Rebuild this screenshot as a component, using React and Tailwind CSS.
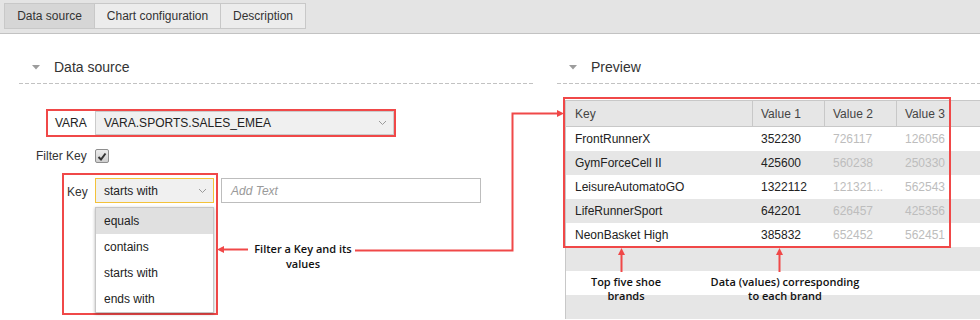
import React from "react";

const RED = "#f04848";

const rows = [
  { key: "FrontRunnerX", v1: "352230", v2: "726117", v3: "126056" },
  { key: "GymForceCell II", v1: "425600", v2: "560238", v3: "250330" },
  { key: "LeisureAutomatoGO", v1: "1322112", v2: "121321...", v3: "562543" },
  { key: "LifeRunnerSport", v1: "642201", v2: "626457", v3: "425356" },
  { key: "NeonBasket High", v1: "385832", v2: "652452", v3: "562451" },
  null,
  null,
  null,
];

function Chevron() {
  return (
    <svg width="9" height="6" viewBox="0 0 9 6" className="shrink-0">
      <polyline points="1,1 4.5,4.5 8,1" fill="none" stroke="#9a9a9a" strokeWidth="1" />
    </svg>
  );
}

function Caret() {
  return (
    <svg width="8" height="5" viewBox="0 0 8 5" className="shrink-0">
      <polygon points="0,0 8,0 4,4.5" fill="#9c9c9c" />
    </svg>
  );
}

function SectionHeader({ title, caretPad, textGap }) {
  return (
    <div className="pt-[23px]">
      <div className={`h-[20px] flex items-center ${caretPad}`}>
        <Caret />
        <span className={`text-[14px] text-[#333] ${textGap}`}>{title}</span>
      </div>
      <div className="mt-[6px] h-px bg-[linear-gradient(to_right,#c2c2c2_4px,transparent_4px)] bg-[length:6px_1px]" />
    </div>
  );
}

function Tab({ label, active, width }) {
  return (
    <div
      className={`${width} h-[26px] -ml-px first:ml-0 flex items-center justify-center whitespace-nowrap border border-[#c8c8c8] text-[12px] text-[#333] ${
        active ? "bg-[#d6d6d6]" : "bg-[#ececec]"
      }`}
    >
      {label}
    </div>
  );
}

export default function App() {
  return (
    <div className="relative w-[980px] h-[320px] overflow-hidden bg-white text-[#333] font-['Liberation_Sans',Arial,sans-serif]">
      {/* tabs */}
      <div className="h-[34px] bg-[#e4e4e4] border-b border-[#c2c2c2] flex items-start pt-[3px] pl-[4px]">
        <Tab label="Data source" width="w-[91px]" active />
        <Tab label="Chart configuration" width="w-[127px]" />
        <Tab label="Description" width="w-[86px]" />
      </div>

      <div className="flex">
        {/* left column */}
        <div className="w-[545px] pl-[19px] pr-[12px] shrink-0">
          <SectionHeader title="Data source" caretPad="pl-[13px]" textGap="ml-[14px]" />

          <div className="mt-[25px] ml-[27px] w-[350px] h-[28px] border-2 border-[#f04848] flex text-[12px]">
            <div className="w-[47px] pl-[7px] flex items-center text-[#222]">VARA</div>
            <div className="flex-1 bg-[#f0f0f0] border border-[#cbcbcb] flex items-center justify-between pl-[8px] pr-[6px] text-[#222]">
              <span>VARA.SPORTS.SALES_EMEA</span>
              <Chevron />
            </div>
          </div>

          <div className="mt-[12px] h-[14px] flex items-center pl-[17px] text-[12px] text-[#333]">
            <span className="w-[59px]">Filter Key</span>
            <div className="w-[14px] h-[14px] rounded-[2px] border border-[#8e8e8e] bg-[linear-gradient(#ececec,#cfcfcf)] flex items-center justify-center">
              <svg width="10" height="9" viewBox="0 0 10 9">
                <polyline points="1.5,5 4,7.5 8.5,1.5" fill="none" stroke="#333" strokeWidth="2" />
              </svg>
            </div>
          </div>

          <div className="mt-[10px] ml-[43px] flex items-start">
            <div className="w-[156px] h-[142px] border-2 border-[#f04848] pt-[3px]">
              <div className="flex items-start text-[12px]">
                <span className="w-[31px] pl-[3px] pt-[5px] text-[#333]">Key</span>
                <div className="w-[119px] h-[25px] bg-[#f0f0f0] border border-[#f3c23a] flex items-center justify-between pl-[8px] pr-[6px] text-[#222]">
                  <span>starts with</span>
                  <Chevron />
                </div>
              </div>
              <div className="mt-[4px] ml-[31px] w-[119px] h-[106px] bg-white border border-[#c6c6c6] shadow-[0_1px_3px_rgba(0,0,0,0.3)] text-[12px] text-[#222]">
                <div className="h-[26px] flex items-center pl-[8px] bg-[#e0e0e0]">equals</div>
                <div className="h-[26px] flex items-center pl-[8px]">contains</div>
                <div className="h-[26px] flex items-center pl-[8px]">starts with</div>
                <div className="h-[26px] flex items-center pl-[8px]">ends with</div>
              </div>
            </div>
            <div className="ml-[3px] mt-[5px] w-[260px] h-[25px] border border-[#bdbdbd] flex items-center pl-[9px] text-[12px] italic text-[#9a9a9a]">
              Add Text
            </div>
          </div>
        </div>

        {/* right column */}
        <div className="flex-1 pl-[12px]">
          <SectionHeader title="Preview" caretPad="pl-[12px]" textGap="ml-[14px]" />

          <div className="mt-[16px] ml-[8px] border-l border-t border-[#c8c8c8] text-[12px]">
            <div className="h-[26px] bg-[#e6e6e6] border-b border-[#c8c8c8] flex text-[#444]">
              <div className="w-[187px] pl-[9px] flex items-center border-r border-[#c8c8c8]">Key</div>
              <div className="w-[72px] pl-[8px] flex items-center border-r border-[#c8c8c8]">Value 1</div>
              <div className="w-[72px] pl-[8px] flex items-center border-r border-[#c8c8c8]">Value 2</div>
              <div className="w-[72px] pl-[8px] flex items-center">Value 3</div>
            </div>
            {rows.map((r, i) => (
              <div key={i} className={`h-[24px] flex ${i % 2 === 1 ? "bg-[#e6e6e6]" : "bg-white"}`}>
                {r && (
                  <>
                    <div className="w-[187px] pl-[9px] flex items-center text-[#222]">{r.key}</div>
                    <div className="w-[72px] pl-[8px] flex items-center text-[#222]">{r.v1}</div>
                    <div className="w-[72px] pl-[8px] flex items-center text-[#bdbdbd]">{r.v2}</div>
                    <div className="w-[72px] pl-[8px] flex items-center text-[#bdbdbd]">{r.v3}</div>
                  </>
                )}
              </div>
            ))}
          </div>
        </div>
      </div>

      {/* annotations overlay */}
      <div className="absolute left-[563px] top-[97px] w-[388px] h-[151px] border-2 border-[#f04848] pointer-events-none" />

      <svg className="absolute inset-0 pointer-events-none" width="980" height="320">
        <line x1="248" y1="249.5" x2="222" y2="249.5" stroke={RED} strokeWidth="2" />
        <polygon points="217,249.5 224,246 224,253" fill={RED} />
        <polyline points="355,250.5 512.5,250.5 512.5,113.5 558,113.5" fill="none" stroke={RED} strokeWidth="2" />
        <polygon points="564,113.5 557,110 557,117" fill={RED} />
        <line x1="621.5" y1="272" x2="621.5" y2="253" stroke={RED} strokeWidth="2" />
        <polygon points="621.5,248 618,255 625,255" fill={RED} />
        <line x1="779.5" y1="272" x2="779.5" y2="253" stroke={RED} strokeWidth="2" />
        <polygon points="779.5,248 776,255 783,255" fill={RED} />
      </svg>

      <div className="absolute left-[247px] top-[241px] w-[112px] text-center leading-[15px] text-[11px] font-semibold text-[#111] font-['Open_Sans',sans-serif] pointer-events-none">
        Filter a Key and its
        <br />
        values
      </div>
      <div className="absolute left-[546px] top-[275px] w-[160px] text-center leading-[13.5px] text-[11px] font-semibold text-[#111] font-['Open_Sans',sans-serif] pointer-events-none">
        Top five shoe
        <br />
        brands
      </div>
      <div className="absolute left-[705px] top-[275px] w-[160px] text-center leading-[13.5px] text-[11px] font-semibold text-[#111] font-['Open_Sans',sans-serif] pointer-events-none">
        Data (values) corresponding
        <br />
        to each brand
      </div>
    </div>
  );
}
